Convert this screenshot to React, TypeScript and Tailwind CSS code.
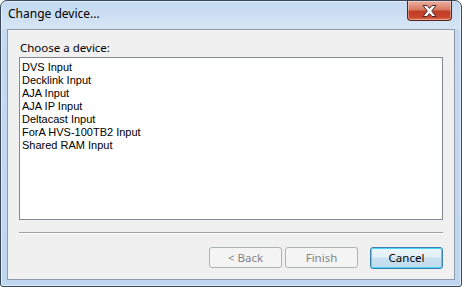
import type { ReactNode } from 'react';

const DEVICES = [
  'DVS Input',
  'Decklink Input',
  'AJA Input',
  'AJA IP Input',
  'Deltacast Input',
  'ForA HVS-100TB2 Input',
  'Shared RAM Input',
];

const font = { fontFamily: '"Noto Sans", "Open Sans", Arial, sans-serif' };
const listFont = { fontFamily: '"Liberation Sans", Arial, sans-serif' };

function CloseButton() {
  return (
    <div className="absolute right-[9px] top-0 flex h-[20px] w-[45px] items-center justify-center rounded-b-[4px] border border-t-0 border-[#5b2218] bg-[linear-gradient(#eab0a2_0%,#d97a64_45%,#c23f27_55%,#c8442b_85%,#e0765a_100%)] shadow-[inset_0_0_0_1px_rgba(255,255,255,0.35)]">
      <svg width="17" height="14" viewBox="0 0 17 14">
        <path
          d="M2 1.5h4L8.5 4.4 11 1.5h4L10.7 7l4.3 5.5h-4L8.5 9.6 6 12.5H2L6.3 7z"
          fill="#ffffff"
          stroke="#4a2a26"
          strokeWidth="1"
          strokeLinejoin="round"
        />
      </svg>
    </div>
  );
}

function WinButton({ children, disabled, primary }: { children: ReactNode; disabled?: boolean; primary?: boolean }) {
  if (disabled) {
    return (
      <div className="flex h-[21px] w-[73px] items-center justify-center rounded-[3px] border border-[#adb2b5] bg-[#f4f4f4] text-[11.5px] text-[#838383]">
        {children}
      </div>
    );
  }
  return (
    <div
      className={`flex h-[22px] w-[73px] items-center justify-center rounded-[3px] border text-[11.5px] text-black ${
        primary
          ? 'border-[#3c7fb1] bg-[linear-gradient(#eaf6fd_0%,#e3f0f8_45%,#c9e1f0_50%,#c1dbee_100%)] shadow-[inset_0_0_0_1px_#48d7f8]'
          : 'border-[#707070] bg-[linear-gradient(#f2f2f2_0%,#ebebeb_45%,#dddddd_50%,#cfcfcf_100%)]'
      }`}
    >
      {children}
    </div>
  );
}

export default function App() {
  return (
    <div className="h-[287px] w-[462px] bg-white" style={font}>
      <div className="relative flex h-[287px] w-[462px] flex-col rounded-t-[7px] rounded-b-[3px] border border-[#39475a] bg-[linear-gradient(#c3d9f0_0px,#d6e5f5_28px,#c4daf1_29px,#bfd6ef_100%)] shadow-[inset_0_0_0_1px_rgba(255,255,255,0.55)]">
        <div className="flex h-[28px] shrink-0 items-center pl-[7px] pb-[3px] text-[12px] text-black">Change device...</div>
        <CloseButton />
        <div className="mx-[6px] mb-[6px] flex flex-1 flex-col border border-[#8e9baa] bg-[#f0f0f0] px-[11px]">
          <div className="pl-[1px] pt-[10px] text-[11.5px] leading-[16px] text-black">Choose a device:</div>
          <div className="mt-[1px] h-[163px] border border-[#828790] bg-white px-[2px] pt-[3px]" style={listFont}>
            {DEVICES.map((d) => (
              <div key={d} className="text-[11px] leading-[13px] text-black">
                {d}
              </div>
            ))}
          </div>
          <div className="mt-[12px] h-[2px] border-t border-b border-t-[#a0a0a0] border-b-white" />
          <div className="mt-[13px] flex items-start justify-end">
            <WinButton disabled>&lt; Back</WinButton>
            <div className="w-[3px]" />
            <WinButton disabled>Finish</WinButton>
            <div className="w-[12px]" />
            <WinButton primary>Cancel</WinButton>
          </div>
        </div>
      </div>
    </div>
  );
}
